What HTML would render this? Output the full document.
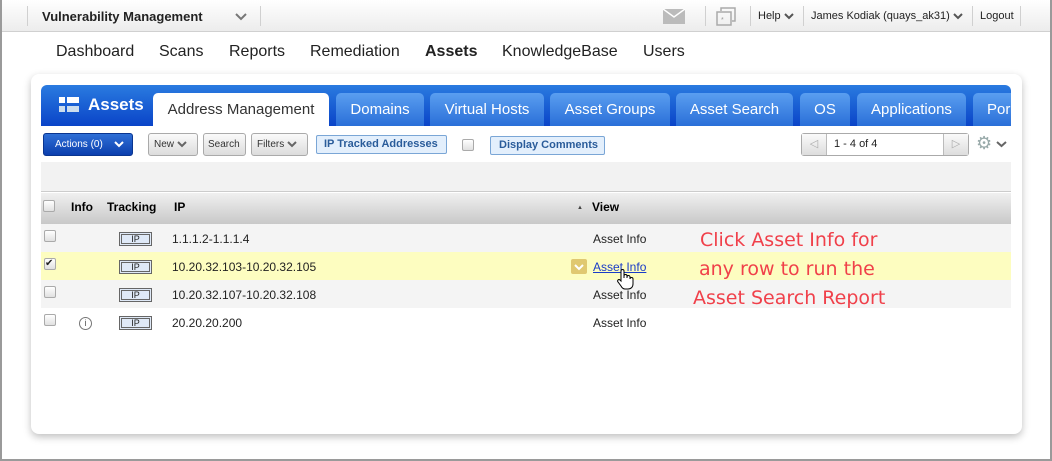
<!DOCTYPE html>
<html><head><meta charset="utf-8"><style>
*{box-sizing:border-box;margin:0;padding:0}
body{width:1052px;height:461px;overflow:hidden;background:#fff;font-family:"Liberation Sans",Arial,sans-serif;position:relative}
.a{position:absolute}
.frame{left:0;top:0;width:1052px;height:461px;border:2px solid #9a9a9a;border-top:none}
.top{left:2px;top:0;width:1048px;height:32px;background:linear-gradient(#fff,#ececec);border-bottom:1px solid #d0d0d0}
.sep{width:1px;height:20px;background:#d0d0d0;top:6px}
.nav{top:43px;font-size:16px;color:#222}
.panel{left:31px;top:74px;width:991px;height:360px;background:#fff;border-radius:8px;box-shadow:0 3px 8px rgba(0,0,0,.25)}
.blue{left:41px;top:85px;width:970px;height:41px;background:linear-gradient(#2a7be0,#0a44c8);border-radius:6px 6px 0 0;overflow:hidden}
.tab{top:93px;height:33px;background:linear-gradient(#5a9ef0,#2a6fd8);color:#fff;font-size:15px;line-height:33px;text-align:center;border-radius:5px 5px 0 0}
.btn{top:133px;height:23px;border:1px solid #aaa;border-radius:3px;background:linear-gradient(#fafafa,#dcdcdc);font-size:10px;line-height:21px;color:#333;padding:0 5px}
.btn svg,.ch{vertical-align:middle}
.cb{width:12px;height:12px;border:1px solid #aaa;border-radius:2px;background:linear-gradient(#fff,#e0e0e0)}
.row{left:41px;width:970px;height:28px;font-size:12px;color:#222}
.ip{position:absolute;left:78px;top:8px;width:33px;height:14px;border:3px double #666;background:#dfe9f7;font-size:9px;text-align:center;line-height:9px}
.row .t{position:absolute;left:131px;top:8px}
.row .v{position:absolute;left:552px;top:8px}
.red{color:#f0404a;font-family:"DejaVu Sans",sans-serif;font-size:19px}
</style></head><body>
<div class="a frame"></div>
<div class="a top"></div>
<div class="a sep" style="left:27px"></div>
<div class="a" style="left:42px;top:9px;font-size:13px;font-weight:bold;color:#222">Vulnerability Management</div>
<svg class="a" style="left:235px;top:13px" width="12" height="8"><path d="M1 1l5 5 5-5" stroke="#777" stroke-width="2" fill="none"/></svg>
<div class="a sep" style="left:260px"></div>
<svg class="a" style="left:663px;top:9px" width="22" height="15"><rect width="22" height="15" fill="#bbb"/><path d="M0 0l11 8 11-8" stroke="#fff" stroke-width="1.5" fill="none"/></svg>
<div class="a sep" style="left:705px"></div>
<svg class="a" style="left:716px;top:7px" width="22" height="19"><rect x="1" y="5" width="14" height="13" fill="none" stroke="#aaa" stroke-width="1.5"/><path d="M5 4V1h14v13h-3" fill="none" stroke="#aaa" stroke-width="1.5"/><text x="5" y="15" font-size="7" fill="#999">*</text></svg>
<div class="a sep" style="left:750px"></div>
<div class="a" style="left:758px;top:10px;font-size:11px;color:#222">Help <svg class="ch" width="10" height="7"><path d="M1 1l4 4 4-4" stroke="#555" stroke-width="2" fill="none"/></svg></div>
<div class="a sep" style="left:803px"></div>
<div class="a" style="left:811px;top:10px;font-size:11px;color:#222">James Kodiak (quays_ak31) <svg class="ch" width="10" height="7"><path d="M1 1l4 4 4-4" stroke="#555" stroke-width="2" fill="none"/></svg></div>
<div class="a sep" style="left:972px"></div>
<div class="a" style="left:980px;top:10px;font-size:11px;color:#222">Logout</div>
<div class="a sep" style="left:1020px"></div>
<div class="a nav" style="left:56px">Dashboard</div>
<div class="a nav" style="left:159px">Scans</div>
<div class="a nav" style="left:229px">Reports</div>
<div class="a nav" style="left:310px">Remediation</div>
<div class="a nav" style="left:425px;font-weight:bold">Assets</div>
<div class="a nav" style="left:502px">KnowledgeBase</div>
<div class="a nav" style="left:643px">Users</div>
<div class="a panel"></div>
<div class="a blue"></div>
<div class="a" style="left:59px;top:97px;width:6px;height:6px;background:#fff"></div>
<div class="a" style="left:67px;top:97px;width:12px;height:6px;background:#fff"></div>
<div class="a" style="left:59px;top:106px;width:6px;height:6px;background:#cde"></div>
<div class="a" style="left:67px;top:106px;width:12px;height:6px;background:#cde"></div>
<div class="a" style="left:88px;top:95px;color:#fff;font-weight:bold;font-size:17px">Assets</div>
<div class="a tab" style="left:153px;width:176px;background:#fff;color:#333;height:34px">Address Management</div>
<div class="a tab" style="left:336px;width:88px">Domains</div>
<div class="a tab" style="left:430px;width:114px">Virtual Hosts</div>
<div class="a tab" style="left:550px;width:120px">Asset Groups</div>
<div class="a tab" style="left:676px;width:117px">Asset Search</div>
<div class="a tab" style="left:800px;width:50px">OS</div>
<div class="a tab" style="left:857px;width:109px">Applications</div>
<div class="a tab" style="left:973px;width:38px;text-align:left;padding-left:14px;border-radius:5px 0 0 0">Por</div>
<div class="a btn" style="left:43px;width:90px;background:linear-gradient(#2f6fd6,#0b3fae);border-color:#0a3590;color:#fff;padding-left:11px">Actions (0) &nbsp;&nbsp;&nbsp;<svg width="10" height="7"><path d="M1 1l4 4 4-4" stroke="#fff" stroke-width="2" fill="none"/></svg></div>
<div class="a btn" style="left:148px;width:50px">New <svg width="10" height="7"><path d="M1 1l4 4 4-4" stroke="#666" stroke-width="2" fill="none"/></svg></div>
<div class="a btn" style="left:203px;width:43px;padding:0 4px">Search</div>
<div class="a btn" style="left:251px;width:57px">Filters <svg width="10" height="7"><path d="M1 1l4 4 4-4" stroke="#666" stroke-width="2" fill="none"/></svg></div>
<div class="a" style="left:316px;top:135px;width:131px;height:19px;border:1px solid #7aa6d6;background:#e3effc;color:#2a5c9a;font-size:11px;font-weight:bold;line-height:17px;padding-left:7px;border-radius:2px">IP Tracked Addresses</div>
<div class="a cb" style="left:462px;top:139px"></div>
<div class="a" style="left:490px;top:136px;width:115px;height:19px;border:1px solid #7aa6d6;background:#e3effc;color:#2a5c9a;font-size:11px;font-weight:bold;line-height:17px;padding-left:8px;border-radius:2px">Display Comments</div>
<div class="a" style="left:801px;top:133px;width:168px;height:23px;border:1px solid #aaa;border-radius:3px;background:#fff"></div>
<div class="a" style="left:802px;top:134px;width:25px;height:21px;background:linear-gradient(#fafafa,#ddd);border-right:1px solid #bbb;color:#aaa;font-size:11px;text-align:center;line-height:21px">&#9665;</div>
<div class="a" style="left:943px;top:134px;width:25px;height:21px;background:linear-gradient(#fafafa,#ddd);border-left:1px solid #bbb;color:#aaa;font-size:11px;text-align:center;line-height:21px">&#9655;</div>
<div class="a" style="left:834px;top:138px;font-size:11px;color:#222">1 - 4 of 4</div>
<div class="a" style="left:976px;top:133px;font-size:18px;color:#9aa">&#9881;</div>
<svg class="a" style="left:996px;top:141px" width="11" height="7"><path d="M1 1l4.5 4 4.5-4" stroke="#666" stroke-width="2" fill="none"/></svg>
<div class="a" style="left:41px;top:162px;width:970px;height:30px;background:#f2f2f2;border-bottom:1px solid #ccc"></div>
<div class="a" style="left:41px;top:193px;width:970px;height:31px;background:linear-gradient(#f0f0f0,#c8c8c8)"></div>
<div class="a cb" style="left:43px;top:200px"></div>
<div class="a" style="left:71px;top:200px;font-size:12px;font-weight:bold">Info</div>
<div class="a" style="left:107px;top:200px;font-size:12px;font-weight:bold">Tracking</div>
<div class="a" style="left:174px;top:200px;font-size:12px;font-weight:bold">IP</div>
<div class="a" style="left:577px;top:205px;font-size:6px;color:#444">&#9650;</div>
<div class="a" style="left:592px;top:200px;font-size:12px;font-weight:bold">View</div>
<div class="a row" style="top:224px;background:#f4f4f4"><div class="cb a" style="left:3px;top:6px"></div><div class="ip">IP</div><div class="t">1.1.1.2-1.1.1.4</div><div class="v">Asset Info</div></div>
<div class="a row" style="top:252px;background:#fdfdc0"><div class="cb a" style="left:3px;top:6px;font-size:10px;line-height:9px">&#10004;</div><div class="ip">IP</div><div class="t">10.20.32.103-10.20.32.105</div><div class="a" style="left:530px;top:7px;width:16px;height:15px;background:#e0c870;border-radius:2px"><svg style="position:absolute;left:3px;top:5px" width="10" height="7"><path d="M1 1l4 4 4-4" stroke="#fff" stroke-width="2" fill="none"/></svg></div><div class="v" style="color:#1a3cc8;text-decoration:underline">Asset Info</div></div>
<div class="a row" style="top:280px;background:#f4f4f4"><div class="cb a" style="left:3px;top:6px"></div><div class="ip">IP</div><div class="t">10.20.32.107-10.20.32.108</div><div class="v">Asset Info</div></div>
<div class="a row" style="top:308px"><div class="cb a" style="left:3px;top:6px"></div><div class="a" style="left:38px;top:9px;width:13px;height:13px;border:1px solid #777;border-radius:50%;font-size:9px;text-align:center;line-height:11px;color:#555">i</div><div class="ip">IP</div><div class="t">20.20.20.200</div><div class="v">Asset Info</div></div>
<svg class="a" style="left:616px;top:268px" width="18" height="22"><path d="M5 13V3a1.5 1.5 0 013 0v7V8a1.5 1.5 0 013 0v2-1a1.5 1.5 0 013 0v2a1.5 1.5 0 013 0v5c0 3-2 5-5 5H9c-2 0-3-1-4-3l-3-4a1.4 1.4 0 012-2z" fill="#fff" stroke="#000" stroke-width="1"/></svg>
<div class="a red" style="top:229px;left:700px">Click Asset Info for</div>
<div class="a red" style="top:258px;left:699px">any row to run the</div>
<div class="a red" style="top:287px;left:693px">Asset Search Report</div>
</body></html>
